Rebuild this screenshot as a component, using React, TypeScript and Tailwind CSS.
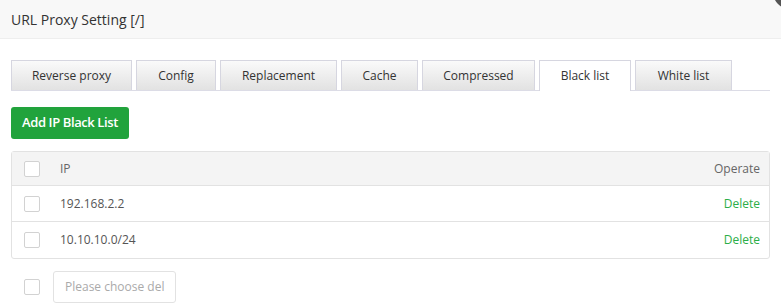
import React from "react";

const tabs: [string, string][] = [
  ["Reverse proxy", "w-[121px]"],
  ["Config", "w-[80px]"],
  ["Replacement", "w-[117px]"],
  ["Cache", "w-[77px]"],
  ["Compressed", "w-[113px]"],
  ["Black list", "w-[92px]"],
  ["White list", "w-[97px]"],
];
const rows = ["192.168.2.2", "10.10.10.0/24"];

function Box() {
  return <span className="block w-4 h-4 rounded-[2px] border border-[#d2d2d2] bg-white" />;
}

export default function App() {
  return (
    <div className="relative w-[781px] h-[303px] overflow-hidden bg-white text-[#333]" style={{ fontFamily: '"Open Sans", "Noto Sans", sans-serif' }}>
      <div className="h-[39px] bg-[#f8f8f8] border-b border-[#eee] pl-[11px] flex items-center text-[14px] text-[#333]">
        URL Proxy Setting [/]
      </div>
      <div className="absolute -right-[26px] -top-[25px] w-[34px] h-[34px] rounded-full bg-[#555]" />
      <div className="px-[11px]">
        <div className="mt-[21px] flex items-start gap-[4px] border-b border-[#dcdce6] w-[759px] h-[31px]">
          {tabs.map(([t, w]) => {
            const active = t === "Black list";
            return (
              <div
                key={t}
                className={
                  active
                    ? "h-[31px] flex justify-center items-center border border-[#d6d6e0] border-b-0 bg-white text-[12px] text-[#333] " + w
                    : "h-[30px] flex justify-center items-center border border-[#d6d6e0] border-b-0 bg-gradient-to-b from-[#fafafa] to-[#e2e2e2] text-[12px] text-[#333] " + w
                }
              >
                {t}
              </div>
            );
          })}
        </div>
        <button className="mt-[16px] h-[32px] w-[118px] flex items-center justify-center rounded-[3px] bg-[#21a33c] text-white text-[13px] font-semibold tracking-[-0.4px]">
          Add IP Black List
        </button>
        <div className="mt-[12px] w-[759px] border border-[#e2e2e2] rounded-[3px]">
          <div className="h-[34px] bg-[#f4f4f4] border-b border-[#e2e2e2] flex items-center pl-[12px] pr-[9px] text-[12px] text-[#666]">
            <Box />
            <span className="ml-[20px] flex-1">IP</span>
            <span>Operate</span>
          </div>
          {rows.map((r, i) => (
            <div key={r} className={"h-[36px] flex items-center pl-[12px] pr-[9px] text-[12px] text-[#555] " + (i === 0 ? "border-b border-[#e2e2e2]" : "")}>
              <Box />
              <span className="ml-[20px] flex-1">{r}</span>
              <span className="text-[#2bae48]">Delete</span>
            </div>
          ))}
        </div>
        <div className="mt-[12px] flex items-center pl-[13px]">
          <Box />
          <div className="ml-[13px] h-[32px] px-[11px] flex items-center border border-[#e2e2e2] rounded-[3px] text-[12px] text-[#aaa]">
            Please choose del
          </div>
        </div>
      </div>
    </div>
  );
}
